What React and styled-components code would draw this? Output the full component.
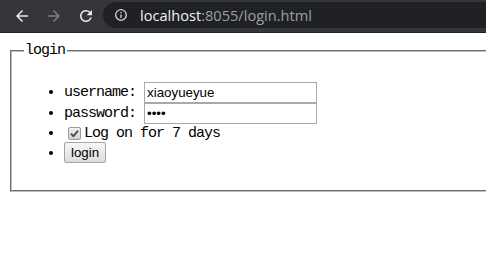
import React from 'react'
import styled, { createGlobalStyle } from 'styled-components'

const Global = createGlobalStyle`
  html, body { margin: 0; padding: 0; background: #fff; overflow: hidden; }
`

const Toolbar = styled.div`
  display: flex;
  align-items: center;
  height: 32px;
  background: #35363a;
  border-bottom: 1px solid #202124;
  padding-left: 13px;
  box-sizing: content-box;
`

const NavButton = styled.div`
  width: 18px;
  height: 18px;
  display: flex;
  align-items: center;
  justify-content: center;
  margin-right: 14px;
  color: ${({ dim }) => (dim ? '#7c7e82' : '#e8eaed')};
`

const Omnibox = styled.div`
  flex: 1;
  display: flex;
  align-items: center;
  height: 26px;
  margin-left: -6px;
  margin-top: -3px;
  background: #202124;
  border-radius: 13px 0 0 13px;
  padding-left: 11px;
  font-family: "Open Sans", "Liberation Sans", sans-serif;
  font-size: 14.6px;
`

const Host = styled.span`
  color: #f1f3f4;
  margin-left: 12px;
`

const Path = styled.span`
  color: #9aa0a6;
`

const Page = styled.div`
  padding: 8px;
`

const Fieldset = styled.fieldset`
  width: 600px;
  margin: 0 2px;
  padding: 0 12px 10px;
  border: 2px groove #c0c0c0;
  font-family: "Liberation Mono", monospace;
  font-size: 15px;
  letter-spacing: -1px;
  color: #000;
`

const Legend = styled.legend`
  padding: 0 2px 0 1px;
  line-height: 20px;
`

const List = styled.ul`
  margin: 21px 0 16px;
  padding-left: 40px;
`

const Item = styled.li`
  height: ${({ h }) => h}px;
  line-height: ${({ h }) => h}px;
  white-space: nowrap;
`

const TextInput = styled.input`
  box-sizing: border-box;
  width: 173px;
  height: 21px;
  margin: 0 0 0 8px;
  padding: 1px 2px;
  border: 1px solid #a9a9a9;
  font-family: "Liberation Sans", Arial, sans-serif;
  font-size: 13.33px;
  letter-spacing: 0;
  color: #000;
  vertical-align: top;
  outline: none;
`

const Check = styled.span`
  display: inline-flex;
  align-items: center;
  justify-content: center;
  box-sizing: border-box;
  width: 13px;
  height: 13px;
  margin: 0 3px 0 4px;
  border: 1px solid #9b9b9b;
  border-radius: 2px;
  background: linear-gradient(#f0f0f0, #d4d4d4);
  vertical-align: -1px;
`

const Button = styled.button`
  box-sizing: border-box;
  height: 21px;
  padding: 0 6px;
  margin: -1px 0 0;
  border: 1px solid #a5a5a5;
  border-radius: 2px;
  background: linear-gradient(#f7f7f7, #dddddd);
  font-family: "Liberation Sans", Arial, sans-serif;
  font-size: 13.33px;
  letter-spacing: 0;
  color: #000;
  vertical-align: top;
`

function Icon({ d, size = 18 }) {
  return (
    <svg width={size} height={size} viewBox="0 0 24 24" fill="currentColor">
      <path d={d} />
    </svg>
  )
}

export default function App() {
  return (
    <>
      <Global />
      <Toolbar>
        <NavButton>
          <Icon d="M20 11H7.83l5.59-5.59L12 4l-8 8 8 8 1.41-1.41L7.83 13H20v-2z" />
        </NavButton>
        <NavButton dim>
          <Icon d="M12 4l-1.41 1.41L16.17 11H4v2h12.17l-5.58 5.59L12 20l8-8z" />
        </NavButton>
        <NavButton>
          <Icon d="M17.65 6.35A7.958 7.958 0 0 0 12 4c-4.42 0-7.99 3.58-7.99 8s3.57 8 7.99 8c3.73 0 6.84-2.55 7.73-6h-2.08A5.99 5.99 0 0 1 12 18c-3.31 0-6-2.690-6-6s2.69-6 6-6c1.66 0 3.14.69 4.22 1.78L13 11h7V4l-2.35 2.35z" />
        </NavButton>
        <Omnibox>
          <svg width="14" height="14" viewBox="0 0 24 24" fill="#e8eaed">
            <path d="M11 7h2v2h-2zm0 4h2v6h-2zm1-9C6.48 2 2 6.48 2 12s4.480 10 10 10 10-4.48 10-10S17.52 2 12 2zm0 18c-4.41 0-8-3.59-8-8s3.59-8 8-8 8 3.59 8 8-3.59 8-8 8z" />
          </svg>
          <Host>localhost</Host>
          <Path>:8055/login.html</Path>
        </Omnibox>
      </Toolbar>
      <Page>
        <Fieldset>
          <Legend>login</Legend>
          <List>
            <Item h={21}>
              username:<TextInput type="text" defaultValue="xiaoyueyue" />
            </Item>
            <Item h={21}>
              password:<TextInput type="password" defaultValue="1234" />
            </Item>
            <Item h={19}>
              <Check>
                <svg width="9" height="9" viewBox="0 0 10 10">
                  <path d="M1 5.2 L3.8 8 L9 1.8" fill="none" stroke="#4a4a4a" strokeWidth="2" />
                </svg>
              </Check>
              Log on for 7 days
            </Item>
            <Item h={21}>
              <Button>login</Button>
            </Item>
          </List>
        </Fieldset>
      </Page>
    </>
  )
}
